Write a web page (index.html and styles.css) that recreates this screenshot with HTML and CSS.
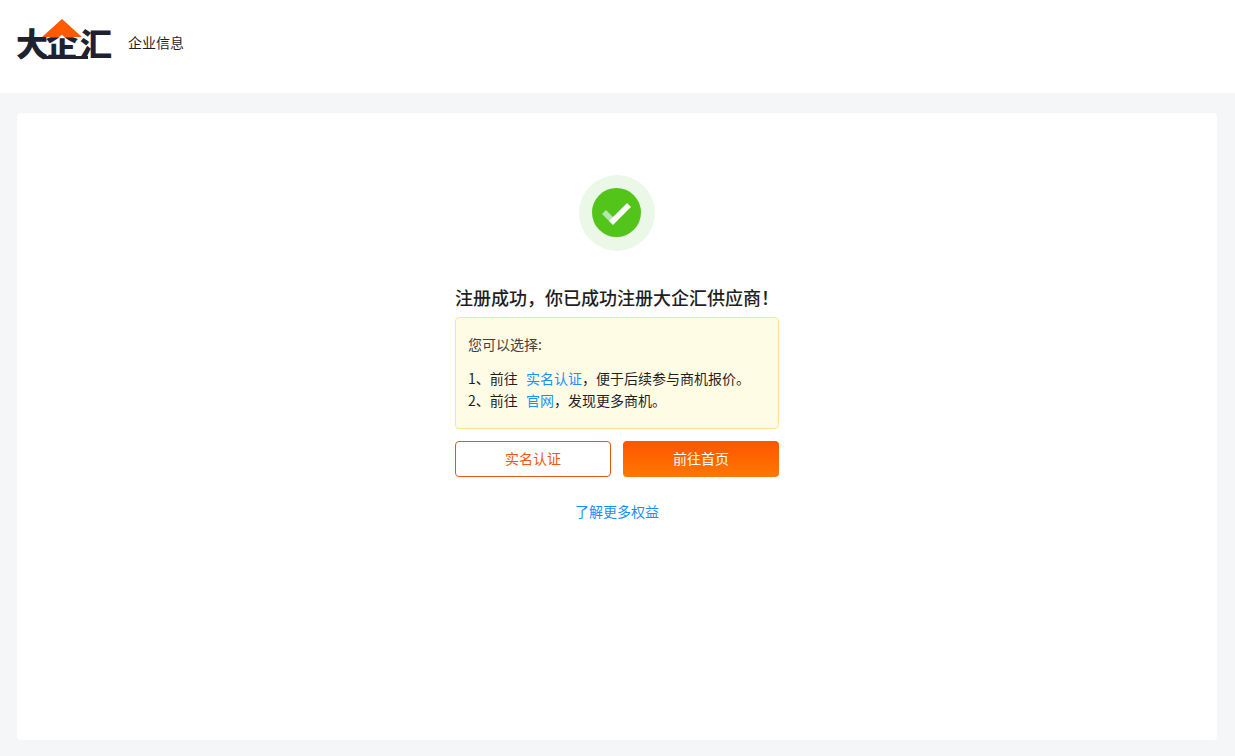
FILE: index.html
```html
<!DOCTYPE html>
<html lang="zh-CN">
<head>
    <meta charset="UTF-8">
    <meta name="viewport" content="width=device-width, initial-scale=1.0">
    <title>企业信息</title>
    <link rel="stylesheet" href="styles.css">
</head>
<body>

<header class="header">
    <a class="logo" href="#">
        <svg width="96" height="50" viewBox="0 0 96 50">
            <defs>
                <linearGradient id="logo-fill" x1="0" y1="19" x2="0" y2="20" gradientUnits="userSpaceOnUse">
                    <stop offset="0" stop-color="#ff5a00"/>
                    <stop offset="1" stop-color="#1e2130"/>
                </linearGradient>
            </defs>
            <text class="logo-text" x="0" y="38">大</text>
            <text class="logo-text logo-mid" x="30" y="38">企</text>
            <text class="logo-text" x="64" y="38">汇</text>
            <path class="logo-roof" d="M46 1 L66 19 H55 L46 12 L37 19 H26 Z"/>
            <path class="logo-base" d="M27 38 H72 V41 H28 Z"/>
        </svg>
    </a>
    <span class="header-title">企业信息</span>
</header>

<main class="card">
    <div class="result">
        <svg class="result-icon" width="76" height="76" viewBox="0 0 76 76">
            <circle cx="38" cy="38" r="38" fill="#ebf8e7"/>
            <circle cx="37.500" cy="37.500" r="24.500" fill="#52c41a"/>
            <path d="M25 37 L33 45" stroke="#b5e6b0" stroke-width="5.500" fill="none"/>
            <path d="M32 48 L50 30" stroke="#fff" stroke-width="5.500" fill="none"/>
        </svg>
        <h1 class="result-title">注册成功，你已成功注册大企汇供应商！</h1>

        <div class="tips">
            <p class="tips-title">您可以选择:</p>
            <p>1、前往 <a class="tips-link" href="#">实名认证</a>，便于后续参与商机报价。</p>
            <p>2、前往 <a class="tips-link" href="#">官网</a>，发现更多商机。</p>
        </div>

        <div class="actions">
            <button type="button" class="btn">实名认证</button>
            <button type="button" class="btn btn-primary">前往首页</button>
        </div>

        <a class="more" href="#">了解更多权益</a>
    </div>
</main>

</body>
</html>
```
FILE: styles.css
```css
* {
    box-sizing: border-box;
}

body {
    display: flex;
    flex-direction: column;
    min-height: 100vh;
    margin: 0;
    background-color: #f4f6f8;
    color: #1f1f1f;
    font-family: "Noto Sans CJK SC", sans-serif;
    font-size: 14px;
    line-height: 22px;
}

a {
    color: #1890ff;
    text-decoration: none;
}

.header {
    display: flex;
    align-items: center;
    gap: 16px;
    padding: 18px 16px 25px;
    background-color: #fff;
}

.header-title {
    padding-bottom: 2px;
}

.logo svg {
    display: block;
}

.logo-text {
    fill: #1e2130;
    font-size: 32px;
    font-weight: 900;
}

.logo-mid {
    fill: url(#logo-fill);
}

.logo-roof {
    fill: #ff5a00;
}

.logo-base {
    fill: #1e2130;
}

.card {
    flex: 1;
    margin: 20px 18px 16px 17px;
    padding: 62px 16px;
    background-color: #fff;
    border-radius: 4px;
}

.result {
    display: flex;
    flex-direction: column;
    align-items: center;
    max-width: 324px;
    margin: 0 auto;
}

.result-title {
    width: 100%;
    margin: 33px 0 7px;
    font-size: 18px;
    font-weight: 500;
    line-height: 26px;
    white-space: nowrap;
}

.tips {
    width: 100%;
    padding: 15px 12px 17px;
    background-color: #fffce6;
    border: 1px solid #ffe58f;
    border-radius: 4px;
}

.tips p {
    margin: 0;
}

.tips .tips-title {
    margin-bottom: 12px;
    color: #454338;
}

.tips-link {
    margin-left: 5px;
}

.actions {
    display: grid;
    grid-template-columns: 1fr 1fr;
    gap: 12px;
    width: 100%;
    margin: 12px 0 23px;
}

.btn {
    height: 36px;
    padding: 0 0 2px;
    background-color: #fff;
    border: 1px solid #e25a12;
    border-radius: 4px;
    color: #f0560f;
    font-family: inherit;
    font-size: 14px;
    cursor: pointer;
}

.btn-primary {
    background: linear-gradient(#ff5500, #ff7700);
    border: none;
    color: #fff;
}
```
